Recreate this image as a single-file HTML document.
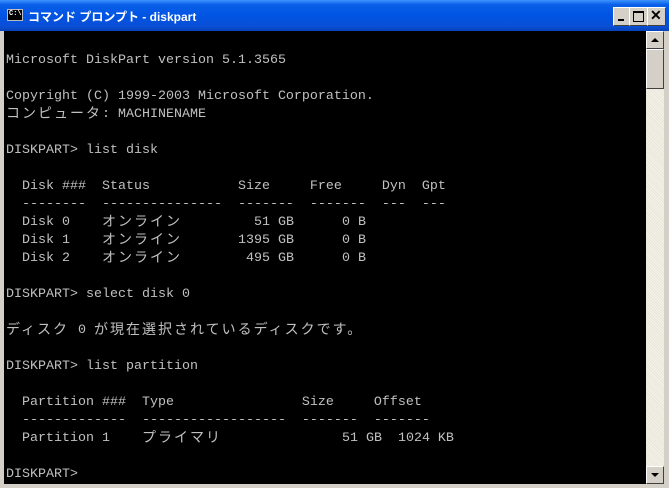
<!DOCTYPE html>
<html><head><meta charset="utf-8"><style>
html,body{margin:0;padding:0;width:669px;height:488px;overflow:hidden;background:#d4d0c8;}
.win{position:absolute;left:0;top:0;width:669px;height:488px;background:#0831d9;}
.title{position:absolute;left:0;top:0;width:669px;height:31px;background:linear-gradient(#3d95ff 0%,#0a5fe8 15%,#0054e3 50%,#0b4fd6 85%,#0842b8 100%);}
.ttext{position:absolute;left:28px;top:8px;color:#fff;font:bold 12px "Liberation Sans","Noto Sans CJK JP",sans-serif;white-space:pre;letter-spacing:0;}
.ico{position:absolute;left:7px;top:9px;width:16px;height:12px;background:#000;border:1px solid #bbb;box-sizing:border-box;color:#fff;font:bold 7px "Liberation Mono",monospace;line-height:9px;text-indent:1px;}
.btn{position:absolute;top:7px;width:19px;height:19px;background:#d4d0c8;border:1px solid;border-color:#fff #404040 #404040 #fff;box-sizing:border-box;}
.frame{position:absolute;left:0;top:31px;width:669px;height:457px;background:#d4d0c8;}
.con{position:absolute;left:4px;top:31px;width:642px;height:453px;background:#000;overflow:hidden;}
.in{position:absolute;left:0;top:2px;width:642px;height:453px;}
.sb{position:absolute;left:646px;top:31px;width:18px;height:453px;background:#f1efe2;background-image:repeating-linear-gradient(45deg,#f4f2ea 0 1px,#e8e5d8 1px 2px);}
.sbb{position:absolute;left:0;width:18px;height:18px;background:#d4d0c8;border:1px solid;border-color:#fff #404040 #404040 #fff;box-sizing:border-box;}
.l{position:absolute;left:2px;height:18px;line-height:18px;color:#c0c0c0;font:13.33px/18px "Liberation Mono","Noto Sans CJK JP",monospace;white-space:pre;}
.j{display:inline-block;overflow:hidden;vertical-align:top;font-family:"Noto Sans CJK JP",sans-serif;font-size:14px;position:relative;top:-2px;white-space:nowrap;}
</style></head><body>
<div class="win">
<div class="title">
<div class="ico">C:\</div>
<div class="ttext">コマンド プロンプト - diskpart</div>
<div class="btn" style="left:613px"><div style="position:absolute;left:4px;top:11px;width:6px;height:2px;background:#000"></div></div>
<div class="btn" style="left:629px"><div style="position:absolute;left:3px;top:3px;width:9px;height:8px;border:1px solid #000;border-top-width:2px"></div></div>
<div class="btn" style="left:647px"><div style="position:absolute;left:2px;top:-1px;font:bold 14px 'Liberation Sans',sans-serif;color:#000">✕</div></div>
</div>
<div class="frame"></div>
<div class="con"><div class="in">
<div class="l" style="top:19px">Microsoft DiskPart version 5.1.3565</div>
<div class="l" style="top:55px">Copyright (C) 1999-2003 Microsoft Corporation.</div>
<div class="l" style="top:73px"><span class="j" style="width:96px;letter-spacing:2px">コンピュータ</span>: MACHINENAME</div>
<div class="l" style="top:109px">DISKPART&gt; list disk</div>
<div class="l" style="top:145px">  Disk ###  Status           Size     Free     Dyn  Gpt</div>
<div class="l" style="top:163px">  --------  ---------------  -------  -------  ---  ---</div>
<div class="l" style="top:181px">  Disk 0    <span class="j" style="width:80px;letter-spacing:2px">オンライン</span>         51 GB      0 B</div>
<div class="l" style="top:199px">  Disk 1    <span class="j" style="width:80px;letter-spacing:2px">オンライン</span>       1395 GB      0 B</div>
<div class="l" style="top:217px">  Disk 2    <span class="j" style="width:80px;letter-spacing:2px">オンライン</span>        495 GB      0 B</div>
<div class="l" style="top:253px">DISKPART&gt; select disk 0</div>
<div class="l" style="top:289px"><span class="j" style="width:64px;letter-spacing:2px">ディスク</span> 0 <span class="j" style="width:272px;letter-spacing:2px">が現在選択されているディスクです。</span></div>
<div class="l" style="top:325px">DISKPART&gt; list partition</div>
<div class="l" style="top:361px">  Partition ###  Type                Size     Offset</div>
<div class="l" style="top:379px">  -------------  ------------------  -------  -------</div>
<div class="l" style="top:397px">  Partition 1    <span class="j" style="width:80px;letter-spacing:2px">プライマリ</span>               51 GB  1024 KB</div>
<div class="l" style="top:433px">DISKPART&gt;</div>
</div></div>
<div class="sb">
<div class="sbb" style="top:0"><div style="position:absolute;left:4px;top:6px;width:0;height:0;border-left:4px solid transparent;border-right:4px solid transparent;border-bottom:4px solid #000"></div></div>
<div class="sbb" style="top:18px;height:40px"></div>
<div class="sbb" style="top:435px"><div style="position:absolute;left:4px;top:6px;width:0;height:0;border-left:4px solid transparent;border-right:4px solid transparent;border-top:4px solid #000"></div></div>
</div>
</div>
</body></html>
